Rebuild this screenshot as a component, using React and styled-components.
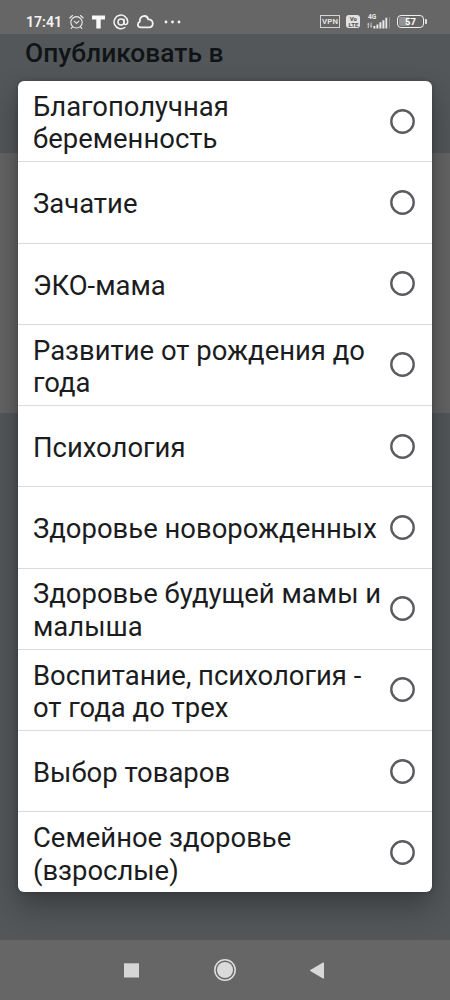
import React from 'react';
import styled, { createGlobalStyle } from 'styled-components';

const GlobalStyle = createGlobalStyle`
  * { box-sizing: border-box; }
  body { margin: 0; font-family: Roboto, 'Noto Sans', sans-serif; background: #666; }
`;

const Screen = styled.main`
  position: relative;
  display: flex;
  flex-direction: column;
  width: 450px;
  height: 1000px;
  overflow: hidden;
  background: #53575a;
`;

const StatusBar = styled.header`
  display: flex;
  justify-content: space-between;
  align-items: center;
  flex: none;
  height: 34px;
  padding: 9px 23px 0 26px;
  background: #666;
  color: #f4f4f4;
`;

const StatusGroup = styled.div`
  display: flex;
  align-items: center;
  gap: ${(p) => p.$gap}px;
`;

const Clock = styled.span`
  width: 35px;
  font-size: 14.1px;
  font-weight: 600;
  line-height: 18px;
  white-space: nowrap;
`;

const PageHeading = styled.h1`
  flex: none;
  height: 119px;
  margin: 0;
  padding: 3px 25px 0;
  color: #101416;
  font-size: 26.4px;
  font-weight: 500;
  line-height: 32px;
  white-space: nowrap;
`;

const PageCard = styled.div`
  flex: none;
  height: 260px;
  background: #646464;
`;

const PageRest = styled.div`
  flex: 1;
`;

const NavBar = styled.nav`
  display: flex;
  flex: none;
  align-items: center;
  justify-content: center;
  height: 60px;
  gap: 73.5px;
  padding-right: 2px;
  background: #666;
`;

const Dialog = styled.section`
  position: absolute;
  top: 81px;
  left: 18px;
  display: grid;
  grid-template-rows: repeat(10, 81.25px);
  width: 414px;
  height: 811px;
  border-radius: 6px;
  background: #fff;
  box-shadow: 0 14px 30px rgba(0, 0, 0, 0.32), 0 0 5px rgba(0, 0, 0, 0.22);
  overflow: hidden;
`;

const Option = styled.label`
  display: flex;
  align-items: center;
  justify-content: space-between;
  min-height: 0;
  padding: 0 17px 0 15px;
  border-bottom: 1px solid #dadbdc;

  &:last-child { border-bottom-color: transparent; }
`;

const OptionText = styled.span`
  padding-top: 4.5px;
  color: #1b1c1e;
  font-size: 27.45px;
  line-height: 32.5px;
  white-space: pre;
`;

const Radio = styled.svg`
  flex: none;
  width: 25px;
  height: 25px;
  margin-left: -20px;
  fill: none;
  stroke: #5b5c60;
  stroke-width: 2.4;
`;

const options = [
  'Благополучная\nбеременность',
  'Зачатие',
  'ЭКО-мама',
  'Развитие от рождения до\nгода',
  'Психология',
  'Здоровье новорожденных',
  'Здоровье будущей мамы и\nмалыша',
  'Воспитание, психология -\nот года до трех',
  'Выбор товаров',
  'Семейное здоровье\n(взрослые)',
];

const AlarmIcon = () => (
  <svg width="15" height="16" viewBox="0 0 15 16" fill="none" stroke="#eee" strokeWidth="1.1" strokeLinecap="round">
    <circle cx="7.5" cy="8.3" r="5.7" />
    <path d="M5.3 7.4 7.5 9.3 9.9 7.2M.8 4 3.5 1.5M14.2 4 11.5 1.5M3.5 13 2.2 14.4M11.5 13l1.3 1.4" />
  </svg>
);

const BlockTIcon = () => (
  <svg width="13" height="14" viewBox="0 0 13 14" fill="#f7f7f7">
    <path d="M0 .5h13v4H8.7V13.4H4.3V4.5H0z" />
  </svg>
);

const AtIcon = () => (
  <svg width="16" height="16" viewBox="0 0 16 16" fill="none" stroke="#f2f2f2" strokeWidth="1.5" strokeLinecap="round">
    <circle cx="8" cy="8" r="3" />
    <path d="M11 5.2v3.6c0 2.7 3.7 2.3 3.7-1A6.8 6.8 0 1 0 11.8 13.5" />
  </svg>
);

const CloudIcon = () => (
  <svg width="17" height="14" viewBox="0 0 17 14" fill="none" stroke="#f2f2f2" strokeWidth="1.8" strokeLinejoin="round">
    <path d="M4 12.4C.2 12.4 0 8.2 2.8 6.8 2.4.4 9.9-1 11.3 4.4c5.6.2 6 8 .8 8z" />
  </svg>
);

const DotsIcon = () => (
  <svg width="17" height="4" viewBox="0 0 17 4" fill="#f4f4f4">
    <circle cx="2" cy="2" r="1.4" /><circle cx="8.5" cy="2" r="1.4" /><circle cx="15" cy="2" r="1.4" />
  </svg>
);

const VpnBadge = styled.span`
  display: flex;
  justify-content: center;
  width: 20px;
  height: 13px;
  border: 1px solid #d4d4d4;
  color: #e8e8e8;
  font-size: 7.8px;
  font-weight: 600;
  line-height: 12px;
  letter-spacing: 0.2px;
`;

const LteBadge = styled.span`
  width: 14px;
  height: 13px;
  padding-top: 1px;
  border-radius: 3px;
  background: #e2e2e2;
  color: #555;
  font-size: 6px;
  font-weight: 800;
  line-height: 5.7px;
  text-align: center;
  white-space: pre;
`;

const SignalIcon = () => (
  <svg width="24" height="18" viewBox="0 0 24 18" fill="#e8e8e8">
    <text x="1" y="6.2" fontSize="6.6" fontWeight="700" fontFamily="Roboto, sans-serif">4G</text>
    <path d="M0 11.5 1.3 9.5 2.6 11.5H1.8V15H.8v-3.5zM2.8 12.8h.8V9.5h1v3.3h.7L4.1 15z" opacity=".75" />
    <path d="M6.4 12.9h2v2.6h-2zM9.4 11.4h2v4.1h-2zM12.4 9.3h2v6.2h-2zM15.4 7.3h2v8.2h-2z" />
    <path d="M18.4 4.7h1.8v10.8h-1.8z" /><path d="M22 4h1v11.5h-1z" opacity=".3" />
  </svg>
);

const Battery = styled.span`
  position: relative;
  width: 27px;
  height: 13px;
  margin-right: 3px;
  padding: 1px;
  border: 1.5px solid #eee;
  border-radius: 4px;
  background: linear-gradient(90deg, #929292 0 45%, transparent 45%);
  background-clip: content-box;
  color: #fff;
  font-size: 9.5px;
  font-weight: 700;
  line-height: 9px;
  text-align: center;

  &::after {
    content: '';
    position: absolute;
    right: -4px;
    top: 3px;
    width: 2px;
    height: 5px;
    border-radius: 0 1px 1px 0;
    background: #ddd;
  }
`;

const RecentIcon = () => (
  <svg width="15" height="15" viewBox="0 0 15 15"><path d="M0 .3h15v14.2H0z" fill="#d6d6d6" /></svg>
);
const HomeIcon = () => (
  <svg width="24" height="24" viewBox="0 0 24 24">
    <circle cx="12" cy="12" r="10.2" fill="none" stroke="#dedede" strokeWidth="1.5" />
    <circle cx="12" cy="12" r="8" fill="#dadada" />
  </svg>
);
const BackIcon = () => (
  <svg width="14" height="17" viewBox="0 0 14 17"><path d="M.3 8.1Q-.1 8.5.3 8.9L13 16.5q1 .4 1-.6V1.1q0-1-1-.6z" fill="#d8d8d8" /></svg>
);

export default function App() {
  return (
    <Screen>
      <GlobalStyle />
      <StatusBar>
        <StatusGroup $gap={8}>
          <Clock>17:41</Clock>
          <AlarmIcon />
          <BlockTIcon />
          <AtIcon />
          <StatusGroup $gap={10}>
            <CloudIcon />
            <DotsIcon />
          </StatusGroup>
        </StatusGroup>
        <StatusGroup $gap={6.3}>
          <VpnBadge>VPN</VpnBadge>
          <LteBadge>{'Vo\nLTE'}</LteBadge>
          <SignalIcon />
          <Battery>57</Battery>
        </StatusGroup>
      </StatusBar>
      <PageHeading>Опубликовать в</PageHeading>
      <PageCard />
      <PageRest />
      <NavBar>
        <RecentIcon />
        <HomeIcon />
        <BackIcon />
      </NavBar>
      <Dialog>
        {options.map((label) => (
          <Option key={label}>
            <OptionText>{label}</OptionText>
            <Radio viewBox="0 0 25 25">
              <circle cx="12.5" cy="12.5" r="11.2" />
            </Radio>
          </Option>
        ))}
      </Dialog>
    </Screen>
  );
}
